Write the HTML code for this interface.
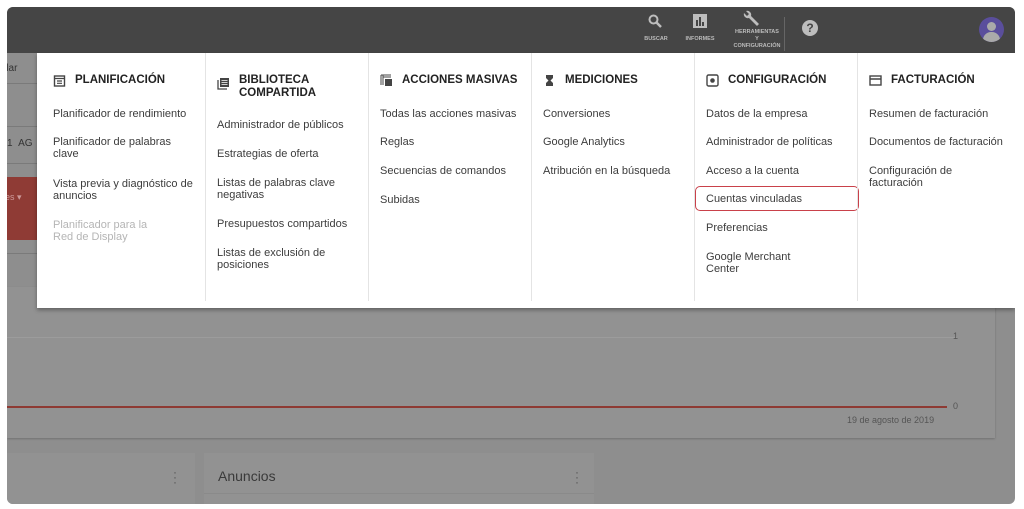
<!DOCTYPE html>
<html><head><meta charset="utf-8"><style>
*{margin:0;padding:0;box-sizing:border-box}
body{width:1024px;height:509px;background:#fff;font-family:"Liberation Sans",sans-serif;position:relative;overflow:hidden}
.app{position:absolute;left:7px;top:7px;width:1008px;height:497px;background:#8e8e8e;border-radius:6px;overflow:hidden}
.top{position:absolute;left:0;top:0;width:100%;height:46px;background:#454545}
.abs{position:absolute}
.menu{position:absolute;left:30px;top:46px;width:978px;height:255px;background:#fff;box-shadow:0 2px 4px rgba(0,0,0,.35)}
.col{position:absolute;top:0;height:248px;width:163px}
.col+.col{border-left:1px solid #e4e4e4}
.h{position:absolute;top:21px;left:11px;font-size:11.5px;font-weight:bold;color:#222;display:flex;align-items:flex-start;gap:9px;line-height:13px}
.ic{width:13px;height:13px;flex:none;margin-top:0}
.it{position:absolute;left:11px;font-size:11px;color:#3c3c3c;line-height:11.5px;width:142px}
.c1 .h,.c1 .it{left:16px}
.g{color:#b5b5b5}
.small{font-size:5.5px;color:#bbb;text-align:center;position:absolute;font-weight:bold}
</style></head><body>
<div class="app">
<div class="top">
 <svg class="abs" style="left:641px;top:7px" width="14" height="15" viewBox="0 0 14 15"><circle cx="5.5" cy="5.5" r="4" fill="none" stroke="#bdbdbd" stroke-width="2"/><path d="M8.5 8.5L13 13" stroke="#bdbdbd" stroke-width="2.5"/></svg>
 <div class="small" style="left:633px;top:29px;width:32px">BUSCAR</div>
 <div class="abs" style="left:686px;top:7px;width:14px;height:14px;background:#bdbdbd"><div class="abs" style="left:3px;top:6px;width:2px;height:6px;background:#454545"></div><div class="abs" style="left:6px;top:3px;width:2px;height:9px;background:#454545"></div><div class="abs" style="left:9px;top:8px;width:2px;height:4px;background:#454545"></div></div>
 <div class="small" style="left:673px;top:29px;width:40px">INFORMES</div>
 <svg class="abs" style="left:734px;top:2px" width="20" height="20" viewBox="0 0 20 20"><path d="M3 4a4 4 0 0 0 5 5l8 8 2-2-8-8a4 4 0 0 0-5-5l3 3-2 2z" fill="#bdbdbd"/></svg>
 <div class="small" style="left:722px;top:22px;width:56px;line-height:7px">HERRAMIENTAS<br>Y<br>CONFIGURACIÓN</div>
 <div class="abs" style="left:777px;top:10px;width:1px;height:34px;background:#666"></div>
 <div class="abs" style="left:795px;top:13px;width:16px;height:16px;border-radius:50%;background:#bdbdbd;color:#454545;font-size:12px;font-weight:bold;text-align:center;line-height:16px">?</div>
 <div class="abs" style="left:972px;top:10px;width:25px;height:25px;border-radius:50%;background:#5a4e9c;overflow:hidden"><div class="abs" style="left:8px;top:5px;width:9px;height:9px;border-radius:50%;background:#aaa"></div><div class="abs" style="left:4px;top:15px;width:17px;height:10px;border-radius:8px 8px 0 0;background:#aaa"></div></div>
</div>
<div class="abs" style="left:-4px;top:56px;font-size:10px;color:#333">dar</div>
<div class="abs" style="left:0;top:76px;width:30px;height:1px;background:#7a7a7a"></div>
<div class="abs" style="left:0;top:119px;width:30px;height:1px;background:#7a7a7a"></div>
<div class="abs" style="left:0;top:131px;font-size:10px;color:#333">1&nbsp;&nbsp;AG</div>
<div class="abs" style="left:0;top:156px;width:30px;height:1px;background:#7a7a7a"></div>
<div class="abs" style="left:0;top:170px;width:30px;height:63px;background:#8f3b35"></div>
<div class="abs" style="left:-2px;top:185px;font-size:9px;color:#c99">es ▾</div>
<div class="abs" style="left:0;top:246px;width:30px;height:1px;background:#7a7a7a"></div>
<div class="abs" style="left:0;top:280px;width:988px;height:151px;background:#929292;box-shadow:0 1px 2px rgba(0,0,0,.2)"></div>
<div class="abs" style="left:0;top:330px;width:950px;height:1px;background:#9c9c9c"></div>
<div class="abs" style="left:946px;top:324px;font-size:9px;color:#555">1</div>
<div class="abs" style="left:0;top:399px;width:940px;height:2px;background:#8e3a33"></div>
<div class="abs" style="left:946px;top:394px;font-size:9px;color:#555">0</div>
<div class="abs" style="left:840px;top:408px;font-size:9px;color:#555">19 de agosto de 2019</div>
<div class="abs" style="left:0;top:446px;width:188px;height:60px;background:#929292"></div>
<div class="abs" style="left:197px;top:446px;width:390px;height:60px;background:#929292"></div>
<div class="abs" style="left:211px;top:461px;font-size:14px;color:#3a3a3a">Anuncios</div>
<div class="abs" style="left:166px;top:463px;font-size:12px;color:#555;line-height:5px">·<br>·<br>·</div>
<div class="abs" style="left:568px;top:463px;font-size:12px;color:#555;line-height:5px">·<br>·<br>·</div>
<div class="abs" style="left:197px;top:486px;width:390px;height:1px;background:#8a8a8a"></div>

<div class="menu">
 <div class="col c1" style="left:0;width:168px"><div class="h"><svg class="ic" viewBox="0 0 13 13"><rect x="1.5" y="2" width="10" height="10" fill="none" stroke="#444" stroke-width="1.4"/><path d="M1.5 4.5h10M4 7h5M4 9.3h5" stroke="#444" stroke-width="1.2"/></svg>PLANIFICACIÓN</div>
  <div class="it" style="top:56px">Planificador de rendimiento</div>
  <div class="it" style="top:84px">Planificador de palabras clave</div>
  <div class="it" style="top:126px">Vista previa y diagnóstico de anuncios</div>
  <div class="it g" style="top:167px">Planificador para la<br>Red de Display</div></div>
 <div class="col" style="left:168px"><div class="h"><svg class="ic" viewBox="0 0 13 13" style="margin-top:3px"><rect x="3" y="1" width="9" height="9" fill="#444"/><path d="M1 3v9h9" fill="none" stroke="#444" stroke-width="1.3"/><path d="M4.5 3.5h6M4.5 5.5h6M4.5 7.5h6" stroke="#fff" stroke-width=".8"/></svg>BIBLIOTECA<br>COMPARTIDA</div>
  <div class="it" style="top:67px">Administrador de públicos</div>
  <div class="it" style="top:96px">Estrategias de oferta</div>
  <div class="it" style="top:125px">Listas de palabras clave negativas</div>
  <div class="it" style="top:166px">Presupuestos compartidos</div>
  <div class="it" style="top:195px">Listas de exclusión de posiciones</div></div>
 <div class="col" style="left:331px"><div class="h"><svg class="ic" viewBox="0 0 13 13"><path d="M1 1v10M3 1v10M1 1h10M3 3h8" stroke="#444" stroke-width="1"/><rect x="5" y="5" width="7" height="7" fill="#444"/></svg>ACCIONES MASIVAS</div>
  <div class="it" style="top:56px">Todas las acciones masivas</div>
  <div class="it" style="top:84px">Reglas</div>
  <div class="it" style="top:113px">Secuencias de comandos</div>
  <div class="it" style="top:142px">Subidas</div></div>
 <div class="col" style="left:494px"><div class="h"><svg class="ic" viewBox="0 0 13 13"><path d="M3 1h7v3L7.5 6.5 10 9v3H3V9l2.5-2.5L3 4z" fill="#444"/></svg>MEDICIONES</div>
  <div class="it" style="top:56px">Conversiones</div>
  <div class="it" style="top:84px">Google Analytics</div>
  <div class="it" style="top:113px">Atribución en la búsqueda</div></div>
 <div class="col" style="left:657px"><div class="h"><svg class="ic" viewBox="0 0 13 13"><rect x="1" y="1" width="11" height="11" rx="1.5" fill="none" stroke="#444" stroke-width="1.4"/><circle cx="6.5" cy="6.5" r="2.3" fill="#444"/></svg>CONFIGURACIÓN</div>
  <div class="it" style="top:56px">Datos de la empresa</div>
  <div class="it" style="top:84px">Administrador de políticas</div>
  <div class="it" style="top:113px">Acceso a la cuenta</div>
  <div class="abs" style="left:0;top:133px;width:164px;height:25px;border:1.5px solid #c9414a;border-radius:5px"></div>
  <div class="it" style="top:141px">Cuentas vinculadas</div>
  <div class="it" style="top:170px">Preferencias</div>
  <div class="it" style="top:199px">Google Merchant<br>Center</div></div>
 <div class="col" style="left:820px"><div class="h"><svg class="ic" viewBox="0 0 13 13"><rect x="1" y="2" width="11" height="9" fill="none" stroke="#444" stroke-width="1.4"/><path d="M1 5h11" stroke="#444" stroke-width="1.4"/></svg>FACTURACIÓN</div>
  <div class="it" style="top:56px">Resumen de facturación</div>
  <div class="it" style="top:84px">Documentos de facturación</div>
  <div class="it" style="top:113px;width:110px">Configuración de facturación</div></div>
</div>
</div>
</body></html>
